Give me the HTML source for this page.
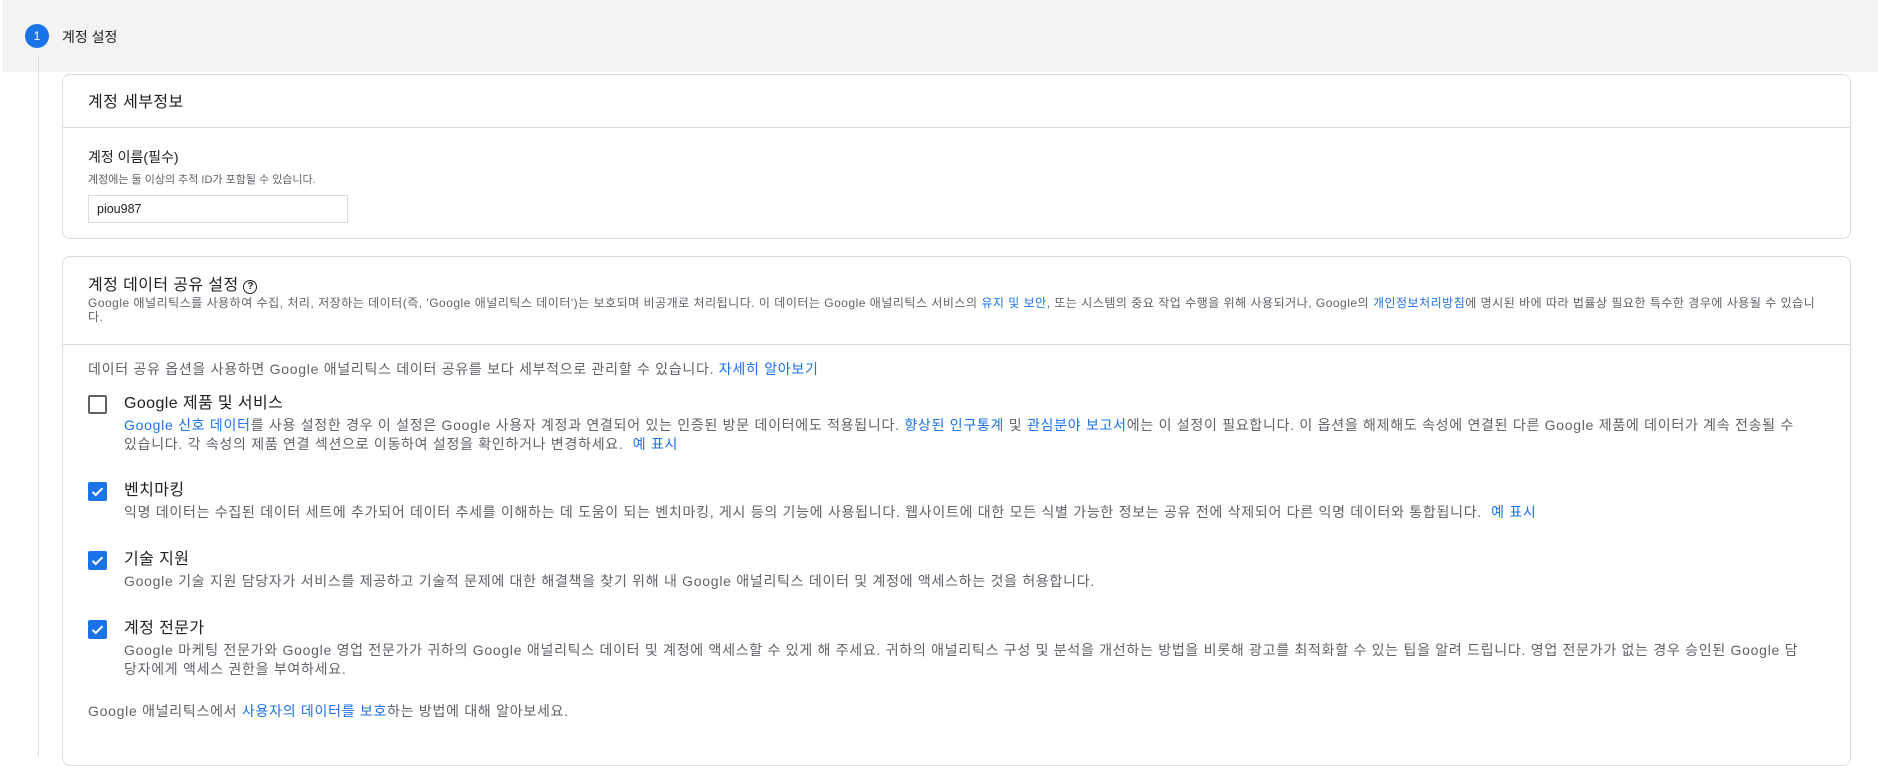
<!DOCTYPE html>
<html><head><meta charset="utf-8"><style>
*{box-sizing:border-box;margin:0;padding:0}
body{width:1878px;height:745px;overflow:hidden;background:#fff;font-family:"Liberation Sans","Noto Sans CJK KR",sans-serif;color:#202124;position:relative}
.band{position:absolute;left:2px;top:0;width:1876px;height:72px;background:#f3f3f3}
.circ{position:absolute;left:25px;top:24px;width:24px;height:24px;border-radius:50%;background:#1a73e8;color:#fff;font-size:12px;text-align:center;line-height:24px}
.step{position:absolute;left:62px;top:27px;font-size:14px}
.vline{position:absolute;left:38px;top:56px;width:1px;height:700px;background:#dadce0}
.card{position:absolute;left:62px;width:1789px;border:1px solid #dadce0;border-radius:8px;background:#fff}
a{color:#1a73e8;text-decoration:none}
.sub{color:#5f6368}
.cb{position:absolute;left:25px;width:19px;height:19px;border-radius:2px}
.cb.off{border:2px solid #5f6368}
.cb.on{background:#1a73e8}
.opt{position:absolute;left:61px;right:40px}
.opt .t{font-size:16px;line-height:20px;letter-spacing:0.4px}
.opt .d{font-size:14px;line-height:19px;color:#5f6368;margin-top:2px;letter-spacing:0.72px}
.w{font-size:14px;letter-spacing:0.72px}
</style></head><body>
<div class="band"></div>
<div class="circ">1</div>
<div class="step">계정 설정</div>
<div class="vline"></div>

<div class="card" style="top:74px;height:165px">
  <div style="position:absolute;left:25px;top:13px;font-size:16px;letter-spacing:0.4px">계정 세부정보</div>
  <div style="position:absolute;left:0;right:0;top:52px;height:1px;background:#dadce0"></div>
  <div style="position:absolute;left:25px;top:72px;font-size:14px">계정 이름(필수)</div>
  <div class="sub" style="position:absolute;left:25px;top:96px;font-size:11px">계정에는 둘 이상의 추적 ID가 포함될 수 있습니다.</div>
  <div style="position:absolute;left:25px;top:120px;width:260px;height:28px;border:1px solid #dadce0;font-size:12.5px;line-height:26px;padding-left:8px">piou987</div>
</div>

<div class="card" style="top:256px;height:510px">
  <div style="position:absolute;left:25px;top:14px;font-size:16px;letter-spacing:0.4px">계정 데이터 공유 설정 <span style="display:inline-block;width:14px;height:14px;border:1.5px solid #202124;border-radius:50%;font-size:10px;line-height:11px;text-align:center;font-weight:bold;vertical-align:1px;letter-spacing:0">?</span></div>
  <div class="sub" style="position:absolute;left:25px;top:39px;right:20px;font-size:12px;line-height:14px;letter-spacing:0.5px">Google 애널리틱스를 사용하여 수집, 처리, 저장하는 데이터(즉, 'Google 애널리틱스 데이터')는 보호되며 비공개로 처리됩니다. 이 데이터는 Google 애널리틱스 서비스의 <a>유지 및 보안</a>, 또는 시스템의 중요 작업 수행을 위해 사용되거나, Google의 <a>개인정보처리방침</a>에 명시된 바에 따라 법률상 필요한 특수한 경우에 사용될 수 있습니다.</div>
  <div style="position:absolute;left:0;right:0;top:87px;height:1px;background:#dadce0"></div>
  <div class="sub w" style="position:absolute;left:25px;top:102px">데이터 공유 옵션을 사용하면 Google 애널리틱스 데이터 공유를 보다 세부적으로 관리할 수 있습니다. <a>자세히 알아보기</a></div>

  <div class="cb off" style="top:138px"></div>
  <div class="opt" style="top:137px"><div class="t">Google 제품 및 서비스</div><div class="d"><a>Google 신호 데이터</a>를 사용 설정한 경우 이 설정은 Google 사용자 계정과 연결되어 있는 인증된 방문 데이터에도 적용됩니다. <a>향상된 인구통계</a> 및 <a>관심분야 보고서</a>에는 이 설정이 필요합니다. 이 옵션을 해제해도 속성에 연결된 다른 Google 제품에 데이터가 계속 전송될 수 있습니다. 각 속성의 제품 연결 섹션으로 이동하여 설정을 확인하거나 변경하세요. &nbsp;<a>예 표시</a></div></div>

  <div class="cb on" style="top:225px"><svg width="19" height="19"><path d="M4.5 9.8l3.2 3.2 6.8-6.8" stroke="#fff" stroke-width="2" fill="none"/></svg></div>
  <div class="opt" style="top:224px"><div class="t">벤치마킹</div><div class="d">익명 데이터는 수집된 데이터 세트에 추가되어 데이터 추세를 이해하는 데 도움이 되는 벤치마킹, 게시 등의 기능에 사용됩니다. 웹사이트에 대한 모든 식별 가능한 정보는 공유 전에 삭제되어 다른 익명 데이터와 통합됩니다. &nbsp;<a>예 표시</a></div></div>

  <div class="cb on" style="top:294px"><svg width="19" height="19"><path d="M4.5 9.8l3.2 3.2 6.8-6.8" stroke="#fff" stroke-width="2" fill="none"/></svg></div>
  <div class="opt" style="top:293px"><div class="t">기술 지원</div><div class="d">Google 기술 지원 담당자가 서비스를 제공하고 기술적 문제에 대한 해결책을 찾기 위해 내 Google 애널리틱스 데이터 및 계정에 액세스하는 것을 허용합니다.</div></div>

  <div class="cb on" style="top:363px"><svg width="19" height="19"><path d="M4.5 9.8l3.2 3.2 6.8-6.8" stroke="#fff" stroke-width="2" fill="none"/></svg></div>
  <div class="opt" style="top:362px"><div class="t">계정 전문가</div><div class="d">Google 마케팅 전문가와 Google 영업 전문가가 귀하의 Google 애널리틱스 데이터 및 계정에 액세스할 수 있게 해 주세요. 귀하의 애널리틱스 구성 및 분석을 개선하는 방법을 비롯해 광고를 최적화할 수 있는 팁을 알려 드립니다. 영업 전문가가 없는 경우 승인된 Google 담당자에게 액세스 권한을 부여하세요.</div></div>

  <div class="sub w" style="position:absolute;left:25px;top:444px">Google 애널리틱스에서 <a>사용자의 데이터를 보호</a>하는 방법에 대해 알아보세요.</div>
</div>
</body></html>
